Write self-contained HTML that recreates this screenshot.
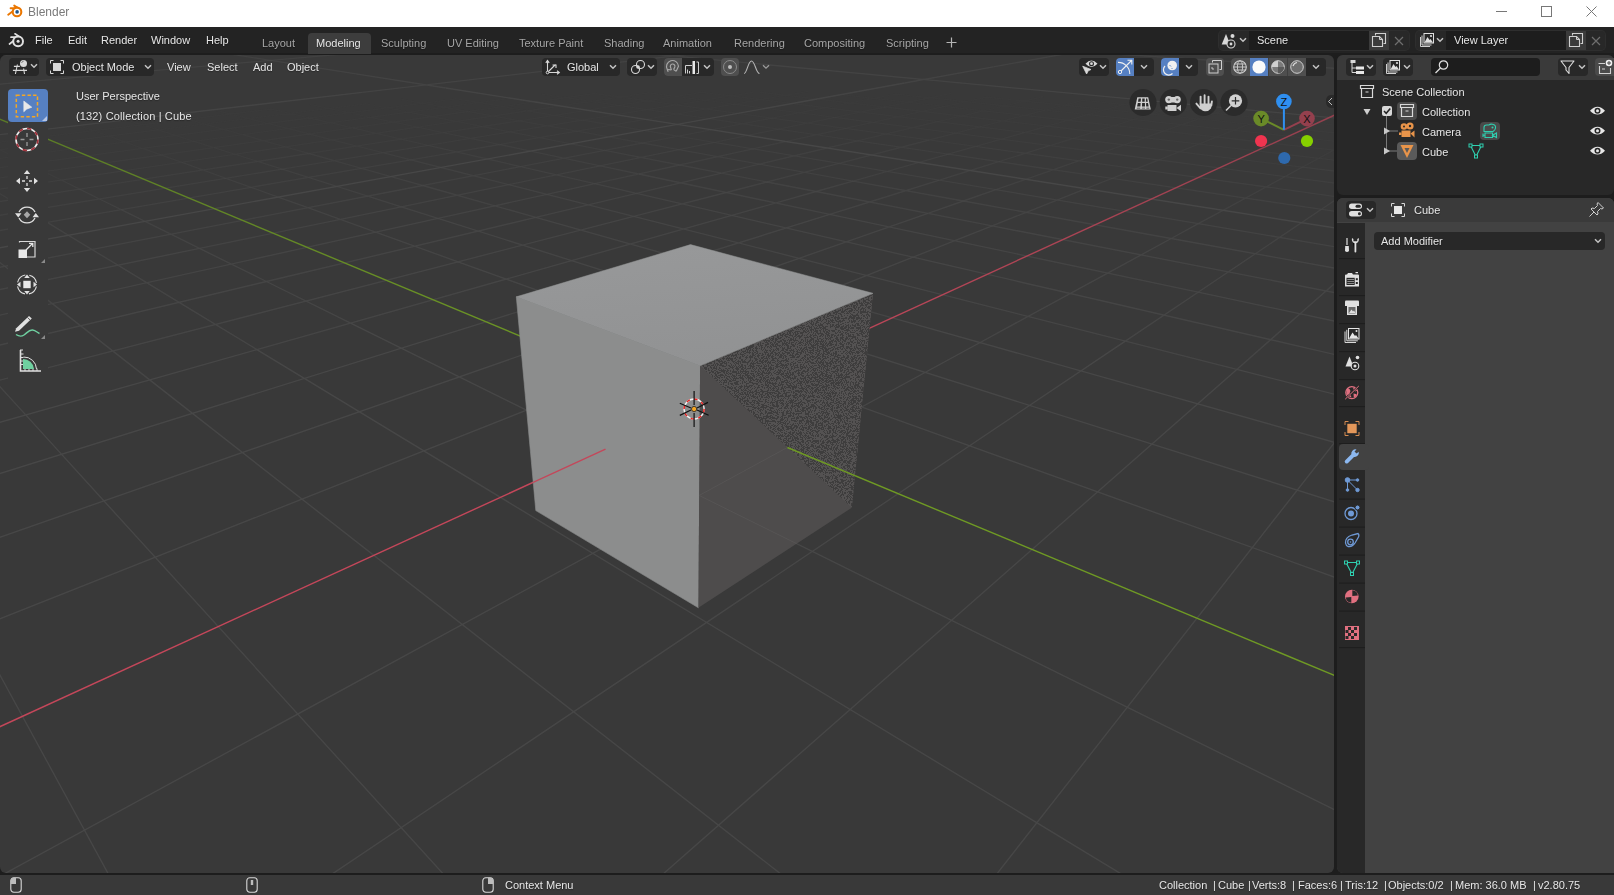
<!DOCTYPE html>
<html><head><meta charset="utf-8">
<style>
*{margin:0;padding:0;box-sizing:border-box}
html,body{width:1614px;height:895px;overflow:hidden;background:#1d1d1d;font-family:"Liberation Sans",sans-serif;font-size:11px;color:#e6e6e6}
.a{position:absolute}
.t{position:absolute;white-space:pre;line-height:1;text-shadow:0 1px 1px rgba(0,0,0,.35);will-change:transform}
svg{position:absolute;overflow:visible}
</style></head><body>

<div class="a" style="left:0;top:0;width:1614px;height:27px;background:#fff"></div>
<svg style="left:7px;top:4px" width="17" height="14" viewBox="0 0 17 14">
  <path d="M1.2 10.8L6.5 6.8M3.6 4.2H8.8M7.2 1.6L11.5 4.3" stroke="#ea7600" stroke-width="1.9" stroke-linecap="round" fill="none"/>
  <circle cx="10" cy="7.9" r="4.3" fill="#fff" stroke="#ea7600" stroke-width="2.1"/>
  <circle cx="10.1" cy="7.9" r="1.8" fill="#265787"/>
</svg>
<div class="t" style="left:28px;top:6px;font-size:12px;color:#7a7a7a;text-shadow:none">Blender</div>
<div class="a" style="left:1496px;top:11px;width:11px;height:1px;background:#777"></div>
<div class="a" style="left:1541px;top:6px;width:11px;height:11px;border:1px solid #777"></div>
<svg style="left:1586px;top:6px" width="11" height="11" viewBox="0 0 11 11"><path d="M0.5 0.5L10.5 10.5M10.5 0.5L0.5 10.5" stroke="#777" stroke-width="1"/></svg>

<div class="a" style="left:0;top:27px;width:1614px;height:26px;background:#232323"></div>
<svg style="left:8px;top:32px" width="17" height="16" viewBox="0 0 17 16">
  <path d="M1.5 12 L8 6.8 M3 5.2 L9.5 5.2 M7 1.8 L12.5 5.5" fill="none" stroke="#e0e0e0" stroke-width="1.7" stroke-linecap="round"/>
  <circle cx="10.1" cy="9.3" r="4.9" fill="#232323" stroke="#e0e0e0" stroke-width="2"/>
  <circle cx="10.1" cy="9.3" r="1.5" fill="#e0e0e0"/>
</svg>
<div class="t" style="left:34.5px;top:35px">File</div>
<div class="t" style="left:67.5px;top:35px">Edit</div>
<div class="t" style="left:101px;top:35px">Render</div>
<div class="t" style="left:151px;top:35px">Window</div>
<div class="t" style="left:206px;top:35px">Help</div>
<div class="a" style="left:308px;top:33px;width:63px;height:21px;background:#3d3d3d;border-radius:4px 4px 0 0"></div>
<div class="t" style="left:262px;top:38px;color:#a5a5a5">Layout</div>
<div class="t" style="left:316px;top:38px;color:#e6e6e6">Modeling</div>
<div class="t" style="left:381px;top:38px;color:#a5a5a5">Sculpting</div>
<div class="t" style="left:447px;top:38px;color:#a5a5a5">UV Editing</div>
<div class="t" style="left:519px;top:38px;color:#a5a5a5">Texture Paint</div>
<div class="t" style="left:604px;top:38px;color:#a5a5a5">Shading</div>
<div class="t" style="left:663px;top:38px;color:#a5a5a5">Animation</div>
<div class="t" style="left:734px;top:38px;color:#a5a5a5">Rendering</div>
<div class="t" style="left:804px;top:38px;color:#a5a5a5">Compositing</div>
<div class="t" style="left:886px;top:38px;color:#a5a5a5">Scripting</div>
<svg style="left:946px;top:37px" width="11" height="11" viewBox="0 0 11 11"><path d="M5.5 0.5V10.5M0.5 5.5H10.5" stroke="#b5b5b5" stroke-width="1.2"/></svg>
<!-- scene selector -->
<div class="a" style="left:1218px;top:30px;width:192px;height:21px;background:#2e2e2e;border-radius:5px"></div>
<div class="a" style="left:1415px;top:30px;width:191px;height:21px;background:#2e2e2e;border-radius:5px"></div>
<div class="a" style="left:1219px;top:31px;width:30px;height:19px;background:#282828;border-radius:4px 0 0 4px"></div>
<div class="a" style="left:1249px;top:31px;width:120px;height:19px;background:#1d1d1d"></div>
<div class="a" style="left:1369px;top:31px;width:20px;height:19px;background:#3b3b3b"></div>
<div class="a" style="left:1389px;top:31px;width:20px;height:19px;background:#282828;border-radius:0 4px 4px 0"></div>
<div class="t" style="left:1257px;top:35px">Scene</div>
<div class="a" style="left:1416px;top:31px;width:30px;height:19px;background:#282828;border-radius:4px 0 0 4px"></div>
<div class="a" style="left:1446px;top:31px;width:120px;height:19px;background:#1d1d1d"></div>
<div class="a" style="left:1566px;top:31px;width:20px;height:19px;background:#3b3b3b"></div>
<div class="a" style="left:1586px;top:31px;width:19px;height:19px;background:#282828;border-radius:0 4px 4px 0"></div>
<div class="t" style="left:1454px;top:35px">View Layer</div>
<svg style="left:1221px;top:32px" width="18" height="17" viewBox="0 0 18 17">
  <path d="M5 2L9.3 12.5H0.7Z" fill="#d8d8d8"/>
  <circle cx="11.5" cy="4" r="2" fill="#d8d8d8"/>
  <circle cx="10" cy="12" r="4" fill="#282828" stroke="#d8d8d8" stroke-width="1.1"/>
  <circle cx="10" cy="12" r="1.4" fill="#d8d8d8"/>
</svg>
<svg style="left:1239px;top:37px" width="8" height="6" viewBox="0 0 8 6"><path d="M1 1.2L4 4.2L7 1.2" stroke="#c4c4c4" stroke-width="1.5" fill="none"/></svg>
<svg style="left:1371px;top:32px" width="16" height="16" viewBox="0 0 16 16">
  <path d="M4.5 3.5V1.5H14.5V11.5H12.5" stroke="#d0d0d0" stroke-width="1.1" fill="none"/>
  <path d="M1.5 4.5H8.5L11.5 7.5V14.5H1.5Z" stroke="#d0d0d0" stroke-width="1.1" fill="none"/>
  <path d="M8.5 4.5V7.5H11.5" stroke="#d0d0d0" stroke-width="1" fill="none"/>
</svg>
<svg style="left:1394px;top:36px" width="10" height="10" viewBox="0 0 10 10"><path d="M1 1L9 9M9 1L1 9" stroke="#6e6e6e" stroke-width="1.2"/></svg>
<svg style="left:1419px;top:32px" width="18" height="16" viewBox="0 0 18 16">
  <path d="M1.5 5V14.5H11M3 3.5V13H12.5" stroke="#d0d0d0" stroke-width="1" fill="none"/>
  <rect x="5" y="1.5" width="9.5" height="9.5" stroke="#e0e0e0" stroke-width="1" fill="none"/>
  <path d="M5.5 10.5L8.5 5L10.5 8L11.5 7L14 10.5Z" fill="#e0e0e0"/><circle cx="12" cy="4" r="1.1" fill="#e0e0e0"/>
</svg>
<svg style="left:1436px;top:37px" width="8" height="6" viewBox="0 0 8 6"><path d="M1 1.2L4 4.2L7 1.2" stroke="#c4c4c4" stroke-width="1.5" fill="none"/></svg>
<svg style="left:1568px;top:32px" width="16" height="16" viewBox="0 0 16 16">
  <path d="M4.5 3.5V1.5H14.5V11.5H12.5" stroke="#d0d0d0" stroke-width="1.1" fill="none"/>
  <path d="M1.5 4.5H8.5L11.5 7.5V14.5H1.5Z" stroke="#d0d0d0" stroke-width="1.1" fill="none"/>
  <path d="M8.5 4.5V7.5H11.5" stroke="#d0d0d0" stroke-width="1" fill="none"/>
</svg>
<svg style="left:1591px;top:36px" width="10" height="10" viewBox="0 0 10 10"><path d="M1 1L9 9M9 1L1 9" stroke="#6e6e6e" stroke-width="1.2"/></svg>

<div class="a" style="left:0;top:55px;width:1334px;height:818px;background:#393939;border-radius:6px;overflow:hidden">
<svg style="left:0;top:-55px" width="1334" height="872" viewBox="0 0 1334 872">
<g stroke="#474747" stroke-width="1.35" fill="none">
<path d="M-12.7 143.5L-35.9 132.0M1372.7 128.8L1394.8 116.8M108.8 136.2L79.1 125.4M1249.2 124.1L1277.9 112.7M158.2 129.9L126.5 119.9M1198.7 118.9L1229.5 108.1M204.7 124.1L171.2 114.7M1133.4 119.6L1183.8 103.9M267.6 123.4L213.6 109.7M1087.9 114.7L1124.0 104.5M309.6 118.0L271.3 109.1M1045.0 110.1L1082.4 100.4M370.7 117.3L309.9 104.4M983.5 110.8L1043.1 96.6M408.7 112.1L366.1 103.8M944.8 106.4L986.6 97.2M468.2 111.5L401.3 99.4M885.1 107.0L950.7 93.5M527.7 110.9L456.1 98.8M825.5 107.7L895.7 94.1M618.3 105.4L541.7 94.1M734.2 104.2L809.5 91.2M676.2 104.8L595.2 93.5M676.2 104.8L755.9 91.8M734.2 104.2L648.7 92.9M618.3 105.4L702.3 92.3M792.1 103.5L702.3 92.3M560.4 106.0L648.7 92.9M885.1 107.0L755.9 91.8M468.2 111.5L595.2 93.5M983.5 110.8L840.7 94.7M408.7 112.1L511.0 98.2M1087.9 114.7L895.7 94.1M309.6 118.0L456.1 98.8M1249.2 124.1L986.6 97.2M158.2 129.9L366.1 103.8M1432.5 134.7L1082.4 100.4M-71.1 150.6L271.3 109.1" stroke-opacity="0.08"/>
<path d="M-47.9 164.6L-59.9 157.3M13.8 156.6L-12.7 143.5M1333.6 150.1L1372.7 128.8M142.6 148.3L108.8 136.2M1216.6 137.0L1249.2 124.1M194.1 141.3L158.2 129.9M1163.9 131.0L1198.7 118.9M242.4 134.7L204.7 124.1M1094.4 131.8L1133.4 119.6M309.3 134.0L267.6 123.4M1047.2 126.2L1087.9 114.7M352.6 127.9L309.6 118.0M979.9 126.9L1045.0 110.1M417.5 127.2L370.7 117.3M937.7 121.7L983.5 110.8M482.4 126.5L408.7 112.1M872.6 122.4L944.8 106.4M519.4 120.8L468.2 111.5M834.9 117.4L885.1 107.0M582.4 120.1L527.7 110.9M771.7 118.1L825.5 107.7M-27.4 13.5L-52.2 9.6M708.6 118.7L618.3 105.4M645.5 119.4L734.2 104.2M771.7 118.1L676.2 104.8M582.4 120.1L676.2 104.8M834.9 117.4L734.2 104.2M519.4 120.8L618.3 105.4M937.7 121.7L792.1 103.5M417.5 127.2L560.4 106.0M1047.2 126.2L885.1 107.0M309.3 134.0L468.2 111.5M1216.6 137.0L983.5 110.8M194.1 141.3L408.7 112.1M1410.8 149.3L1087.9 114.7M-114.2 173.3L309.6 118.0M1422.0 141.7L1249.2 124.1M-59.9 157.3L158.2 129.9M153.7 7.3L105.2 2.7M318.4 2.3L281.2 -0.1M153.7 7.3L318.1 -0.5M-52.2 9.6L174.0 -0.2" stroke-opacity="0.17"/>
<path d="M-35.0 172.4L-47.9 164.6M1385.6 166.2L1410.8 149.3M44.2 171.6L13.8 156.6M1318.6 158.3L1333.6 150.1M161.3 155.0L142.6 148.3M1198.6 144.1L1216.6 137.0M213.9 147.6L194.1 141.3M1124.2 144.9L1163.9 131.0M285.3 146.8L242.4 134.7M1072.9 138.5L1094.4 131.8M332.2 139.8L309.3 134.0M1024.9 132.5L1047.2 126.2M401.3 139.1L352.6 127.9M955.4 133.2L979.9 126.9M443.1 132.6L417.5 127.2M886.0 134.0L937.7 121.7M510.1 131.9L482.4 126.5M845.5 128.3L872.6 122.4M577.1 131.2L519.4 120.8M778.4 129.1L834.9 117.4M644.2 130.5L582.4 120.1M711.2 129.8L771.7 118.1M20.0 20.9L-27.4 13.5M1325.2 6.5L1364.4 -0.7M778.4 129.1L708.6 118.7M577.1 131.2L645.5 119.4M845.5 128.3L771.7 118.1M510.1 131.9L582.4 120.1M955.4 133.2L834.9 117.4M401.3 139.1L519.4 120.8M1072.9 138.5L937.7 121.7M285.3 146.8L417.5 127.2M1256.4 150.9L1047.2 126.2M161.3 155.0L309.3 134.0M1468.9 165.3L1216.6 137.0M-103.4 181.7L194.1 141.3M219.3 13.4L153.7 7.3M1123.4 3.4L1154.9 -0.3M406.8 8.0L318.4 2.3M934.4 2.2L966.1 -0.6M595.6 4.1L505.3 -0.3M744.9 2.4L782.9 -0.3M821.1 2.2L762.4 -0.0M519.6 5.5L620.6 -0.6M1163.8 3.7L1037.0 -0.2M179.3 14.6L458.8 -0.3M1419.4 1.5L1341.6 -0.4M-53.9 17.2L153.7 7.3" stroke-opacity="0.25"/>
<path d="M-6.1 190.0L-35.0 172.4M1371.5 175.7L1385.6 166.2M61.2 180.0L44.2 171.6M1302.4 167.1L1318.6 158.3M181.3 162.2L161.3 155.0M1158.6 160.0L1198.6 144.1M257.7 161.4L213.9 147.6M1102.2 152.5L1124.2 144.9M308.9 153.5L285.3 146.8M1049.9 145.7L1072.9 138.5M382.8 152.7L332.2 139.8M975.6 146.4L1024.9 132.5M428.1 145.3L401.3 139.1M929.3 140.0L955.4 133.2M499.6 144.5L443.1 132.6M857.6 140.8L886.0 134.0M571.1 143.8L510.1 131.9M785.9 141.5L845.5 128.3M642.6 143.0L577.1 131.2M714.2 142.3L778.4 129.1M714.2 142.3L644.2 130.5M642.6 143.0L711.2 129.8M75.2 29.6L20.0 20.9M1270.5 16.4L1325.2 6.5M857.6 140.8L778.4 129.1M499.6 144.5L577.1 131.2M975.6 146.4L845.5 128.3M428.1 145.3L510.1 131.9M1102.2 152.5L955.4 133.2M308.9 153.5L401.3 139.1M1302.4 167.1L1072.9 138.5M123.5 170.8L285.3 146.8M1458.2 174.8L1256.4 150.9M-91.7 190.9L161.3 155.0M302.8 21.3L219.3 13.4M1040.4 13.1L1123.4 3.4M520.3 15.4L406.8 8.0M821.5 12.1L934.4 2.2M757.7 12.0L595.6 4.1M584.0 13.9L744.9 2.4M1131.2 14.0L821.1 2.2M212.8 24.1L519.6 5.5M1402.7 11.0L1163.8 3.7M-56.1 27.1L179.3 14.6" stroke-opacity="0.33"/>
<path d="M10.2 199.9L-6.1 190.0M1356.3 185.9L1371.5 175.7M79.6 189.1L61.2 180.0M1285.0 176.6L1302.4 167.1M226.0 178.3L181.3 162.2M1136.2 168.8L1158.6 160.0M282.1 169.1L257.7 161.4M1078.6 160.8L1102.2 152.5M361.6 168.3L308.9 153.5M998.8 161.6L1049.9 145.7M410.9 159.8L382.8 152.7M948.3 154.2L975.6 146.4M487.5 159.0L428.1 145.3M871.4 155.0L929.3 140.0M530.7 151.1L499.6 144.5M827.1 148.0L857.6 140.8M604.8 150.3L571.1 143.8M753.0 148.8L785.9 141.5M678.8 149.6L642.6 143.0M678.8 149.6L714.2 142.3M753.0 148.8L714.2 142.3M604.8 150.3L642.6 143.0M147.5 41.0L75.2 29.6M1199.0 29.5L1270.5 16.4M948.3 154.2L857.6 140.8M410.9 159.8L499.6 144.5M1136.2 168.8L975.6 146.4M282.1 169.1L428.1 145.3M1433.9 196.1L1102.2 152.5M79.6 189.1L308.9 153.5M1446.5 185.0L1302.4 167.1M-79.0 200.8L123.5 170.8M401.3 30.5L302.8 21.3M931.3 25.9L1040.4 13.1M671.5 25.2L520.3 15.4M671.5 25.2L821.5 12.1M1065.0 26.9L757.7 12.0M280.0 35.5L584.0 13.9M1407.2 24.4L1131.2 14.0M-59.0 40.6L212.8 24.1" stroke-opacity="0.42"/>
<path d="M27.9 210.6L10.2 199.9M1339.6 197.1L1356.3 185.9M99.5 199.0L79.6 189.1M1245.5 198.1L1285.0 176.6M251.0 187.3L226.0 178.3M1112.1 178.4L1136.2 168.8M308.4 177.4L282.1 169.1M1025.7 179.3L1078.6 160.8M391.0 176.6L361.6 168.3M970.2 170.5L998.8 161.6M441.0 167.5L410.9 159.8M887.3 171.4L948.3 154.2M520.5 166.6L487.5 159.0M839.1 163.3L871.4 155.0M600.1 165.8L530.7 151.1M759.4 164.1L827.1 148.0M679.7 165.0L604.8 150.3M679.7 165.0L753.0 148.8M759.4 164.1L678.8 149.6M600.1 165.8L678.8 149.6M839.1 163.3L753.0 148.8M520.5 166.6L604.8 150.3M202.7 49.7L147.5 41.0M1144.4 39.4L1199.0 29.5M1112.1 178.4L948.3 154.2M251.0 187.3L410.9 159.8M1420.0 208.3L1136.2 168.8M-50.2 223.4L282.1 169.1M-65.2 211.6L79.6 189.1M488.8 38.7L401.3 30.5M855.9 34.7L931.3 25.9M822.5 35.0L671.5 25.2M522.1 38.3L671.5 25.2M1413.8 43.8L1065.0 26.9M-63.2 60.0L280.0 35.5" stroke-opacity="0.50"/>
<path d="M-33.7 236.3L-50.2 223.4M47.3 222.4L27.9 210.6M1321.5 209.3L1339.6 197.1M121.2 209.7L99.5 199.0M1223.0 210.3L1245.5 198.1M278.2 197.1L251.0 187.3M1085.9 188.7L1112.1 178.4M367.7 196.2L308.4 177.4M995.9 189.7L1025.7 179.3M422.8 185.5L391.0 176.6M939.4 180.2L970.2 170.5M508.7 184.6L441.0 167.5M853.1 181.1L887.3 171.4M594.7 183.7L520.5 166.6M766.9 182.0L839.1 163.3M638.9 174.0L600.1 165.8M721.6 173.1L759.4 164.1M766.9 182.0L679.7 165.0M594.7 183.7L679.7 165.0M853.1 181.1L759.4 164.1M508.7 184.6L600.1 165.8M995.9 189.7L839.1 163.3M422.8 185.5L520.5 166.6M270.6 60.4L202.7 49.7M1077.4 51.6L1144.4 39.4M1404.9 221.6L1112.1 178.4M-122.8 251.7L251.0 187.3M597.9 48.9L488.8 38.7M747.9 47.3L855.9 34.7M1077.4 51.6L822.5 35.0M270.6 60.4L522.1 38.3" stroke-opacity="0.58"/>
<path d="M-15.4 250.6L-33.7 236.3M1388.2 236.3L1404.9 221.6M68.5 235.3L47.3 222.4M1279.6 237.4L1321.5 209.3M170.8 234.2L121.2 209.7M1198.3 223.7L1223.0 210.3M307.8 207.7L278.2 197.1M1026.3 212.3L1085.9 188.7M401.3 206.8L367.7 196.2M963.4 201.0L995.9 189.7M494.8 205.8L422.8 185.5M869.6 202.0L939.4 180.2M546.9 194.3L508.7 184.6M816.1 191.5L853.1 181.1M636.5 193.4L594.7 183.7M726.3 192.5L766.9 182.0M726.3 192.5L638.9 174.0M636.5 193.4L721.6 173.1M816.1 191.5L766.9 182.0M546.9 194.3L594.7 183.7M963.4 201.0L853.1 181.1M401.3 206.8L508.7 184.6M1198.3 223.7L995.9 189.7M242.5 220.4L422.8 185.5M355.9 73.8L270.6 60.4M993.3 66.9L1077.4 51.6M761.2 64.2L597.9 48.9M586.6 66.1L747.9 47.3M1424.1 74.1L1077.4 51.6M-69.8 90.2L270.6 60.4" stroke-opacity="0.67"/>
<path d="M4.7 266.3L-15.4 250.6M1349.1 270.7L1388.2 236.3M117.9 265.2L68.5 235.3M1255.4 253.7L1279.6 237.4M199.5 248.4L170.8 234.2M1171.2 238.5L1198.3 223.7M375.6 232.1L307.8 207.7M992.1 225.9L1026.3 212.3M438.0 218.4L401.3 206.8M928.0 213.4L963.4 201.0M535.8 217.4L494.8 205.8M829.8 214.4L869.6 202.0M633.7 216.4L546.9 194.3M731.8 215.4L816.1 191.5M731.8 215.4L636.5 193.4M633.7 216.4L726.3 192.5M829.8 214.4L726.3 192.5M535.8 217.4L636.5 193.4M992.1 225.9L816.1 191.5M438.0 218.4L546.9 194.3M1171.2 238.5L963.4 201.0M199.5 248.4L401.3 206.8M1470.0 269.5L1198.3 223.7M-92.3 285.1L242.5 220.4M445.8 88.0L355.9 73.8M904.7 83.0L993.3 66.9M989.1 85.6L761.2 64.2M362.2 92.4L586.6 66.1" stroke-opacity="0.75"/>
<path d="M52.3 303.6L4.7 266.3M1300.1 313.8L1349.1 270.7M179.1 302.3L117.9 265.2M1198.1 292.2L1255.4 253.7M266.4 281.5L199.5 248.4M1107.7 273.1L1171.2 238.5M458.0 261.8L375.6 232.1M913.0 257.2L992.1 225.9M571.6 260.6L438.0 218.4M799.1 258.3L928.0 213.4M685.3 259.5L535.8 217.4M685.3 259.5L829.8 214.4M799.1 258.3L633.7 216.4M571.6 260.6L731.8 215.4M913.0 257.2L731.8 215.4M458.0 261.8L633.7 216.4M1198.1 292.2L829.8 214.4M266.4 281.5L535.8 217.4M1436.4 312.4L992.1 225.9M-54.2 327.1L438.0 218.4M1454.2 289.7L1171.2 238.5M-74.4 304.8L199.5 248.4M535.0 102.0L445.8 88.0M817.0 99.0L904.7 83.0M1442.3 128.1L989.1 85.6M-81.5 144.2L362.2 92.4" stroke-opacity="0.83"/>
<path d="M25.7 414.9L-54.2 327.1M1366.1 402.2L1416.1 338.3M149.7 379.9L52.3 303.6M1236.8 369.4L1300.1 313.8M256.9 349.6L179.1 302.3M1125.3 341.1L1198.1 292.2M350.6 323.1L266.4 281.5M980.1 342.5L1107.7 273.1M621.1 320.4L458.0 261.8M756.6 319.1L913.0 257.2M756.6 319.1L571.6 260.6M621.1 320.4L799.1 258.3M892.3 317.8L685.3 259.5M485.8 321.8L685.3 259.5M1236.8 369.4L799.1 258.3M256.9 349.6L571.6 260.6M1534.6 400.6L913.0 257.2M-140.8 416.5L458.0 261.8M1416.1 338.3L1198.1 292.2M-159.1 382.9L266.4 281.5M677.4 124.4L535.0 102.0M677.4 124.4L817.0 99.0" stroke-opacity="0.92"/>
<path d="M168.3 984.1L-63.1 559.2M1289.6 976.1L1405.1 704.9M541.0 981.4L25.7 414.9M914.7 978.8L1366.1 402.2M914.7 978.8L149.7 379.9M541.0 981.4L1236.8 369.4M1289.6 976.1L256.9 349.6M168.3 984.1L1125.3 341.1M1665.6 973.4L350.6 323.1M-203.2 986.8L980.1 342.5M1442.9 616.1L621.1 320.4M-252.2 718.6L756.6 319.1M1472.9 545.6L756.6 319.1M-63.1 559.2L621.1 320.4M1497.3 488.2L892.3 317.8M-93.8 502.7L485.8 321.8M1517.6 440.7L1236.8 369.4M-119.3 455.9L256.9 349.6M1484.1 251.4L677.4 124.4M-108.4 267.5L677.4 124.4" stroke-opacity="1.00"/>
</g>
<defs>
<linearGradient id="gx" gradientUnits="userSpaceOnUse" x1="770" y1="374" x2="1334" y2="117"><stop offset="0" stop-color="#c4475a"/><stop offset="1" stop-color="#94404e"/></linearGradient>
<linearGradient id="gy" gradientUnits="userSpaceOnUse" x1="615" y1="375" x2="0" y2="118"><stop offset="0" stop-color="#6f9a24"/><stop offset="1" stop-color="#5a7a26"/></linearGradient>
</defs>
<path d="M-19067.6 9463.5L605.5 449.2" stroke="#c4475a" stroke-width="1.4" fill="none"/>
<path d="M769.8 373.9L1591.2 -2.5" stroke="url(#gx)" stroke-width="1.4" fill="none"/>
<path d="M21320.0 9004.7L787.4 447.5" stroke="#6f9a24" stroke-width="1.4" fill="none"/>
<path d="M614.5 375.4L-243.4 17.9" stroke="url(#gy)" stroke-width="1.4" fill="none"/>

<clipPath id="leftclip"><polygon points="700.1,365.8 516.3,296.8 535.8,510.6 698.4,607.8"/></clipPath>
<clipPath id="rightclip"><polygon points="700.1,365.8 873.0,293.3 851.8,507.7 698.4,607.8"/></clipPath>
<polygon points="700.1,365.8 516.3,296.8 535.8,510.6 698.4,607.8" fill="#8c8d8d" stroke="#8c8d8d" stroke-width="0.6"/>
<polygon points="700.1,365.8 873.0,293.3 851.8,507.7 698.4,607.8" fill="#4e4c4c"/>
<g clip-path="url(#rightclip)" stroke="#5c5a5a" stroke-width="1" fill="none" opacity="0.6"><path d="M-12.7 143.5L-35.9 132.0M1372.7 128.8L1394.8 116.8M108.8 136.2L79.1 125.4M1249.2 124.1L1277.9 112.7M158.2 129.9L126.5 119.9M1198.7 118.9L1229.5 108.1M204.7 124.1L171.2 114.7M1133.4 119.6L1183.8 103.9M267.6 123.4L213.6 109.7M1087.9 114.7L1124.0 104.5M309.6 118.0L271.3 109.1M1045.0 110.1L1082.4 100.4M370.7 117.3L309.9 104.4M983.5 110.8L1043.1 96.6M408.7 112.1L366.1 103.8M944.8 106.4L986.6 97.2M468.2 111.5L401.3 99.4M885.1 107.0L950.7 93.5M527.7 110.9L456.1 98.8M825.5 107.7L895.7 94.1M618.3 105.4L541.7 94.1M734.2 104.2L809.5 91.2M676.2 104.8L595.2 93.5M676.2 104.8L755.9 91.8M734.2 104.2L648.7 92.9M618.3 105.4L702.3 92.3M792.1 103.5L702.3 92.3M560.4 106.0L648.7 92.9M885.1 107.0L755.9 91.8M468.2 111.5L595.2 93.5M983.5 110.8L840.7 94.7M408.7 112.1L511.0 98.2M1087.9 114.7L895.7 94.1M309.6 118.0L456.1 98.8M1249.2 124.1L986.6 97.2M158.2 129.9L366.1 103.8M1432.5 134.7L1082.4 100.4M-71.1 150.6L271.3 109.1" stroke-opacity="0.08"/>
<path d="M-47.9 164.6L-59.9 157.3M13.8 156.6L-12.7 143.5M1333.6 150.1L1372.7 128.8M142.6 148.3L108.8 136.2M1216.6 137.0L1249.2 124.1M194.1 141.3L158.2 129.9M1163.9 131.0L1198.7 118.9M242.4 134.7L204.7 124.1M1094.4 131.8L1133.4 119.6M309.3 134.0L267.6 123.4M1047.2 126.2L1087.9 114.7M352.6 127.9L309.6 118.0M979.9 126.9L1045.0 110.1M417.5 127.2L370.7 117.3M937.7 121.7L983.5 110.8M482.4 126.5L408.7 112.1M872.6 122.4L944.8 106.4M519.4 120.8L468.2 111.5M834.9 117.4L885.1 107.0M582.4 120.1L527.7 110.9M771.7 118.1L825.5 107.7M-27.4 13.5L-52.2 9.6M708.6 118.7L618.3 105.4M645.5 119.4L734.2 104.2M771.7 118.1L676.2 104.8M582.4 120.1L676.2 104.8M834.9 117.4L734.2 104.2M519.4 120.8L618.3 105.4M937.7 121.7L792.1 103.5M417.5 127.2L560.4 106.0M1047.2 126.2L885.1 107.0M309.3 134.0L468.2 111.5M1216.6 137.0L983.5 110.8M194.1 141.3L408.7 112.1M1410.8 149.3L1087.9 114.7M-114.2 173.3L309.6 118.0M1422.0 141.7L1249.2 124.1M-59.9 157.3L158.2 129.9M153.7 7.3L105.2 2.7M318.4 2.3L281.2 -0.1M153.7 7.3L318.1 -0.5M-52.2 9.6L174.0 -0.2" stroke-opacity="0.17"/>
<path d="M-35.0 172.4L-47.9 164.6M1385.6 166.2L1410.8 149.3M44.2 171.6L13.8 156.6M1318.6 158.3L1333.6 150.1M161.3 155.0L142.6 148.3M1198.6 144.1L1216.6 137.0M213.9 147.6L194.1 141.3M1124.2 144.9L1163.9 131.0M285.3 146.8L242.4 134.7M1072.9 138.5L1094.4 131.8M332.2 139.8L309.3 134.0M1024.9 132.5L1047.2 126.2M401.3 139.1L352.6 127.9M955.4 133.2L979.9 126.9M443.1 132.6L417.5 127.2M886.0 134.0L937.7 121.7M510.1 131.9L482.4 126.5M845.5 128.3L872.6 122.4M577.1 131.2L519.4 120.8M778.4 129.1L834.9 117.4M644.2 130.5L582.4 120.1M711.2 129.8L771.7 118.1M20.0 20.9L-27.4 13.5M1325.2 6.5L1364.4 -0.7M778.4 129.1L708.6 118.7M577.1 131.2L645.5 119.4M845.5 128.3L771.7 118.1M510.1 131.9L582.4 120.1M955.4 133.2L834.9 117.4M401.3 139.1L519.4 120.8M1072.9 138.5L937.7 121.7M285.3 146.8L417.5 127.2M1256.4 150.9L1047.2 126.2M161.3 155.0L309.3 134.0M1468.9 165.3L1216.6 137.0M-103.4 181.7L194.1 141.3M219.3 13.4L153.7 7.3M1123.4 3.4L1154.9 -0.3M406.8 8.0L318.4 2.3M934.4 2.2L966.1 -0.6M595.6 4.1L505.3 -0.3M744.9 2.4L782.9 -0.3M821.1 2.2L762.4 -0.0M519.6 5.5L620.6 -0.6M1163.8 3.7L1037.0 -0.2M179.3 14.6L458.8 -0.3M1419.4 1.5L1341.6 -0.4M-53.9 17.2L153.7 7.3" stroke-opacity="0.25"/>
<path d="M-6.1 190.0L-35.0 172.4M1371.5 175.7L1385.6 166.2M61.2 180.0L44.2 171.6M1302.4 167.1L1318.6 158.3M181.3 162.2L161.3 155.0M1158.6 160.0L1198.6 144.1M257.7 161.4L213.9 147.6M1102.2 152.5L1124.2 144.9M308.9 153.5L285.3 146.8M1049.9 145.7L1072.9 138.5M382.8 152.7L332.2 139.8M975.6 146.4L1024.9 132.5M428.1 145.3L401.3 139.1M929.3 140.0L955.4 133.2M499.6 144.5L443.1 132.6M857.6 140.8L886.0 134.0M571.1 143.8L510.1 131.9M785.9 141.5L845.5 128.3M642.6 143.0L577.1 131.2M714.2 142.3L778.4 129.1M714.2 142.3L644.2 130.5M642.6 143.0L711.2 129.8M75.2 29.6L20.0 20.9M1270.5 16.4L1325.2 6.5M857.6 140.8L778.4 129.1M499.6 144.5L577.1 131.2M975.6 146.4L845.5 128.3M428.1 145.3L510.1 131.9M1102.2 152.5L955.4 133.2M308.9 153.5L401.3 139.1M1302.4 167.1L1072.9 138.5M123.5 170.8L285.3 146.8M1458.2 174.8L1256.4 150.9M-91.7 190.9L161.3 155.0M302.8 21.3L219.3 13.4M1040.4 13.1L1123.4 3.4M520.3 15.4L406.8 8.0M821.5 12.1L934.4 2.2M757.7 12.0L595.6 4.1M584.0 13.9L744.9 2.4M1131.2 14.0L821.1 2.2M212.8 24.1L519.6 5.5M1402.7 11.0L1163.8 3.7M-56.1 27.1L179.3 14.6" stroke-opacity="0.33"/>
<path d="M10.2 199.9L-6.1 190.0M1356.3 185.9L1371.5 175.7M79.6 189.1L61.2 180.0M1285.0 176.6L1302.4 167.1M226.0 178.3L181.3 162.2M1136.2 168.8L1158.6 160.0M282.1 169.1L257.7 161.4M1078.6 160.8L1102.2 152.5M361.6 168.3L308.9 153.5M998.8 161.6L1049.9 145.7M410.9 159.8L382.8 152.7M948.3 154.2L975.6 146.4M487.5 159.0L428.1 145.3M871.4 155.0L929.3 140.0M530.7 151.1L499.6 144.5M827.1 148.0L857.6 140.8M604.8 150.3L571.1 143.8M753.0 148.8L785.9 141.5M678.8 149.6L642.6 143.0M678.8 149.6L714.2 142.3M753.0 148.8L714.2 142.3M604.8 150.3L642.6 143.0M147.5 41.0L75.2 29.6M1199.0 29.5L1270.5 16.4M948.3 154.2L857.6 140.8M410.9 159.8L499.6 144.5M1136.2 168.8L975.6 146.4M282.1 169.1L428.1 145.3M1433.9 196.1L1102.2 152.5M79.6 189.1L308.9 153.5M1446.5 185.0L1302.4 167.1M-79.0 200.8L123.5 170.8M401.3 30.5L302.8 21.3M931.3 25.9L1040.4 13.1M671.5 25.2L520.3 15.4M671.5 25.2L821.5 12.1M1065.0 26.9L757.7 12.0M280.0 35.5L584.0 13.9M1407.2 24.4L1131.2 14.0M-59.0 40.6L212.8 24.1" stroke-opacity="0.42"/>
<path d="M27.9 210.6L10.2 199.9M1339.6 197.1L1356.3 185.9M99.5 199.0L79.6 189.1M1245.5 198.1L1285.0 176.6M251.0 187.3L226.0 178.3M1112.1 178.4L1136.2 168.8M308.4 177.4L282.1 169.1M1025.7 179.3L1078.6 160.8M391.0 176.6L361.6 168.3M970.2 170.5L998.8 161.6M441.0 167.5L410.9 159.8M887.3 171.4L948.3 154.2M520.5 166.6L487.5 159.0M839.1 163.3L871.4 155.0M600.1 165.8L530.7 151.1M759.4 164.1L827.1 148.0M679.7 165.0L604.8 150.3M679.7 165.0L753.0 148.8M759.4 164.1L678.8 149.6M600.1 165.8L678.8 149.6M839.1 163.3L753.0 148.8M520.5 166.6L604.8 150.3M202.7 49.7L147.5 41.0M1144.4 39.4L1199.0 29.5M1112.1 178.4L948.3 154.2M251.0 187.3L410.9 159.8M1420.0 208.3L1136.2 168.8M-50.2 223.4L282.1 169.1M-65.2 211.6L79.6 189.1M488.8 38.7L401.3 30.5M855.9 34.7L931.3 25.9M822.5 35.0L671.5 25.2M522.1 38.3L671.5 25.2M1413.8 43.8L1065.0 26.9M-63.2 60.0L280.0 35.5" stroke-opacity="0.50"/>
<path d="M-33.7 236.3L-50.2 223.4M47.3 222.4L27.9 210.6M1321.5 209.3L1339.6 197.1M121.2 209.7L99.5 199.0M1223.0 210.3L1245.5 198.1M278.2 197.1L251.0 187.3M1085.9 188.7L1112.1 178.4M367.7 196.2L308.4 177.4M995.9 189.7L1025.7 179.3M422.8 185.5L391.0 176.6M939.4 180.2L970.2 170.5M508.7 184.6L441.0 167.5M853.1 181.1L887.3 171.4M594.7 183.7L520.5 166.6M766.9 182.0L839.1 163.3M638.9 174.0L600.1 165.8M721.6 173.1L759.4 164.1M766.9 182.0L679.7 165.0M594.7 183.7L679.7 165.0M853.1 181.1L759.4 164.1M508.7 184.6L600.1 165.8M995.9 189.7L839.1 163.3M422.8 185.5L520.5 166.6M270.6 60.4L202.7 49.7M1077.4 51.6L1144.4 39.4M1404.9 221.6L1112.1 178.4M-122.8 251.7L251.0 187.3M597.9 48.9L488.8 38.7M747.9 47.3L855.9 34.7M1077.4 51.6L822.5 35.0M270.6 60.4L522.1 38.3" stroke-opacity="0.58"/>
<path d="M-15.4 250.6L-33.7 236.3M1388.2 236.3L1404.9 221.6M68.5 235.3L47.3 222.4M1279.6 237.4L1321.5 209.3M170.8 234.2L121.2 209.7M1198.3 223.7L1223.0 210.3M307.8 207.7L278.2 197.1M1026.3 212.3L1085.9 188.7M401.3 206.8L367.7 196.2M963.4 201.0L995.9 189.7M494.8 205.8L422.8 185.5M869.6 202.0L939.4 180.2M546.9 194.3L508.7 184.6M816.1 191.5L853.1 181.1M636.5 193.4L594.7 183.7M726.3 192.5L766.9 182.0M726.3 192.5L638.9 174.0M636.5 193.4L721.6 173.1M816.1 191.5L766.9 182.0M546.9 194.3L594.7 183.7M963.4 201.0L853.1 181.1M401.3 206.8L508.7 184.6M1198.3 223.7L995.9 189.7M242.5 220.4L422.8 185.5M355.9 73.8L270.6 60.4M993.3 66.9L1077.4 51.6M761.2 64.2L597.9 48.9M586.6 66.1L747.9 47.3M1424.1 74.1L1077.4 51.6M-69.8 90.2L270.6 60.4" stroke-opacity="0.67"/>
<path d="M4.7 266.3L-15.4 250.6M1349.1 270.7L1388.2 236.3M117.9 265.2L68.5 235.3M1255.4 253.7L1279.6 237.4M199.5 248.4L170.8 234.2M1171.2 238.5L1198.3 223.7M375.6 232.1L307.8 207.7M992.1 225.9L1026.3 212.3M438.0 218.4L401.3 206.8M928.0 213.4L963.4 201.0M535.8 217.4L494.8 205.8M829.8 214.4L869.6 202.0M633.7 216.4L546.9 194.3M731.8 215.4L816.1 191.5M731.8 215.4L636.5 193.4M633.7 216.4L726.3 192.5M829.8 214.4L726.3 192.5M535.8 217.4L636.5 193.4M992.1 225.9L816.1 191.5M438.0 218.4L546.9 194.3M1171.2 238.5L963.4 201.0M199.5 248.4L401.3 206.8M1470.0 269.5L1198.3 223.7M-92.3 285.1L242.5 220.4M445.8 88.0L355.9 73.8M904.7 83.0L993.3 66.9M989.1 85.6L761.2 64.2M362.2 92.4L586.6 66.1" stroke-opacity="0.75"/>
<path d="M52.3 303.6L4.7 266.3M1300.1 313.8L1349.1 270.7M179.1 302.3L117.9 265.2M1198.1 292.2L1255.4 253.7M266.4 281.5L199.5 248.4M1107.7 273.1L1171.2 238.5M458.0 261.8L375.6 232.1M913.0 257.2L992.1 225.9M571.6 260.6L438.0 218.4M799.1 258.3L928.0 213.4M685.3 259.5L535.8 217.4M685.3 259.5L829.8 214.4M799.1 258.3L633.7 216.4M571.6 260.6L731.8 215.4M913.0 257.2L731.8 215.4M458.0 261.8L633.7 216.4M1198.1 292.2L829.8 214.4M266.4 281.5L535.8 217.4M1436.4 312.4L992.1 225.9M-54.2 327.1L438.0 218.4M1454.2 289.7L1171.2 238.5M-74.4 304.8L199.5 248.4M535.0 102.0L445.8 88.0M817.0 99.0L904.7 83.0M1442.3 128.1L989.1 85.6M-81.5 144.2L362.2 92.4" stroke-opacity="0.83"/>
<path d="M25.7 414.9L-54.2 327.1M1366.1 402.2L1416.1 338.3M149.7 379.9L52.3 303.6M1236.8 369.4L1300.1 313.8M256.9 349.6L179.1 302.3M1125.3 341.1L1198.1 292.2M350.6 323.1L266.4 281.5M980.1 342.5L1107.7 273.1M621.1 320.4L458.0 261.8M756.6 319.1L913.0 257.2M756.6 319.1L571.6 260.6M621.1 320.4L799.1 258.3M892.3 317.8L685.3 259.5M485.8 321.8L685.3 259.5M1236.8 369.4L799.1 258.3M256.9 349.6L571.6 260.6M1534.6 400.6L913.0 257.2M-140.8 416.5L458.0 261.8M1416.1 338.3L1198.1 292.2M-159.1 382.9L266.4 281.5M677.4 124.4L535.0 102.0M677.4 124.4L817.0 99.0" stroke-opacity="0.92"/>
<path d="M168.3 984.1L-63.1 559.2M1289.6 976.1L1405.1 704.9M541.0 981.4L25.7 414.9M914.7 978.8L1366.1 402.2M914.7 978.8L149.7 379.9M541.0 981.4L1236.8 369.4M1289.6 976.1L256.9 349.6M168.3 984.1L1125.3 341.1M1665.6 973.4L350.6 323.1M-203.2 986.8L980.1 342.5M1442.9 616.1L621.1 320.4M-252.2 718.6L756.6 319.1M1472.9 545.6L756.6 319.1M-63.1 559.2L621.1 320.4M1497.3 488.2L892.3 317.8M-93.8 502.7L485.8 321.8M1517.6 440.7L1236.8 369.4M-119.3 455.9L256.9 349.6M1484.1 251.4L677.4 124.4M-108.4 267.5L677.4 124.4" stroke-opacity="1.00"/></g>
<filter id="nz" x="0" y="0" width="1334" height="872" filterUnits="userSpaceOnUse" color-interpolation-filters="sRGB">
<feTurbulence type="fractalNoise" baseFrequency="1.4" numOctaves="1" seed="3" result="t"/>
<feColorMatrix in="t" type="matrix" values="1 0 0 0 0  1 0 0 0 0  1 0 0 0 0  0 0 0 0 1" result="g"/>
<feComponentTransfer in="g"><feFuncR type="discrete" tableValues="0.247 0.333"/><feFuncG type="discrete" tableValues="0.243 0.322"/><feFuncB type="discrete" tableValues="0.243 0.322"/></feComponentTransfer><feComposite in2="SourceAlpha" operator="in"/>
</filter>
<polygon points="700.1,365.8 873.0,293.3 851.8,507.7" fill="#4a4848" filter="url(#nz)"/>
<defs><linearGradient id="gtop" gradientUnits="userSpaceOnUse" x1="690" y1="245" x2="700" y2="365"><stop offset="0" stop-color="#979899"/><stop offset="1" stop-color="#919293"/></linearGradient></defs>
<polygon points="700.1,365.8 873.0,293.3 690.5,244.6 516.3,296.8" fill="url(#gtop)" stroke="#939495" stroke-width="0.5"/>
<path d="M-19067.6 9463.5L605.5 449.2" stroke="#c4475a" stroke-width="1.4" fill="none" clip-path="url(#leftclip)"/>
<path d="M21320.0 9004.7L787.4 447.5" stroke="#6f9a24" stroke-width="1.4" fill="none" clip-path="url(#rightclip)"/>
</svg></div>

<!-- viewport header -->
<div class="a" style="left:9px;top:58px;width:30px;height:18px;background:#282828;border-radius:4px"></div>
<svg style="left:12px;top:59px" width="18" height="16" viewBox="0 0 18 16">
  <path d="M1.9 7.4H7.9M0.9 11.4H15M5.4 5.5L3.4 15M11.6 9.5L12.5 15" stroke="#d8d8d8" stroke-width="1.1" fill="none"/>
  <circle cx="11.5" cy="4.4" r="3.5" fill="#d8d8d8"/>
  <path d="M9.6 3.8Q10.2 2.4 11.6 2.2" stroke="#555" stroke-width="0.8" fill="none"/>
</svg>
<svg style="left:30px;top:63px" width="8" height="6" viewBox="0 0 8 6"><path d="M1 1.2L4 4.2L7 1.2" stroke="#c4c4c4" stroke-width="1.5" fill="none"/></svg>
<div class="a" style="left:46px;top:58px;width:108px;height:18px;background:#282828;border-radius:4px"></div>
<svg style="left:50px;top:60px" width="14" height="14" viewBox="0 0 14 14">
  <path d="M0.5 3.5V0.5H3.5M10.5 0.5H13.5V3.5M13.5 10.5V13.5H10.5M3.5 13.5H0.5V10.5" stroke="#d8d8d8" stroke-width="1" fill="none"/>
  <rect x="3" y="3" width="8" height="8" fill="#d8d8d8"/>
</svg>
<div class="t" style="left:71.5px;top:61.5px">Object Mode</div>
<svg style="left:144px;top:64px" width="8" height="6" viewBox="0 0 8 6"><path d="M1 1.2L4 4.2L7 1.2" stroke="#c4c4c4" stroke-width="1.5" fill="none"/></svg>
<div class="t" style="left:167px;top:61.5px">View</div>
<div class="t" style="left:207px;top:61.5px">Select</div>
<div class="t" style="left:253px;top:61.5px">Add</div>
<div class="t" style="left:287px;top:61.5px">Object</div>
<!-- global -->
<div class="a" style="left:542px;top:58px;width:78px;height:18px;background:#282828;border-radius:4px"></div>
<svg style="left:545px;top:59px" width="16" height="16" viewBox="0 0 16 16">
  <path d="M2.5 13.5V2M0.8 3.8L2.5 1.5L4.2 3.8M2.5 13.5H14M12 11.8L14.3 13.5L12 15.2M2.5 13.5L10.5 5.5M7.5 6H11V9" stroke="#d8d8d8" stroke-width="1.1" fill="none"/>
  <circle cx="2.5" cy="13.5" r="1.3" fill="#282828" stroke="#d8d8d8" stroke-width="1"/>
</svg>
<div class="t" style="left:567px;top:61.5px">Global</div>
<svg style="left:609px;top:64px" width="8" height="6" viewBox="0 0 8 6"><path d="M1 1.2L4 4.2L7 1.2" stroke="#c4c4c4" stroke-width="1.5" fill="none"/></svg>
<div class="a" style="left:627px;top:58px;width:30px;height:18px;background:#282828;border-radius:4px"></div>
<svg style="left:630px;top:59px" width="16" height="16" viewBox="0 0 16 16">
  <circle cx="10.5" cy="5.5" r="4" stroke="#d8d8d8" stroke-width="1.1" fill="none"/>
  <circle cx="5.5" cy="10.5" r="4" stroke="#d8d8d8" stroke-width="1.1" fill="none"/>
  <circle cx="8" cy="8" r="1.8" fill="#d8d8d8"/>
</svg>
<svg style="left:647px;top:64px" width="8" height="6" viewBox="0 0 8 6"><path d="M1 1.2L4 4.2L7 1.2" stroke="#c4c4c4" stroke-width="1.5" fill="none"/></svg>
<!-- snap -->
<div class="a" style="left:664px;top:58px;width:50px;height:18px;background:#282828;border-radius:4px"></div>
<div class="a" style="left:664px;top:58px;width:18px;height:18px;background:#4f4f4f;border-radius:4px 0 0 4px"></div>
<svg style="left:665px;top:59px" width="16" height="16" viewBox="0 0 16 16">
  <path d="M3.2 12.8L2.3 10.5A6 6 0 1 1 13.5 7.2L11.2 12.2M8.6 10.6L9.8 8A2.3 2.3 0 1 0 5.6 8.4L6.4 10.9" stroke="#a8a8a8" stroke-width="1.2" fill="none"/>
  <path d="M2.3 10.5L6.4 10.9M11.2 12.2L8.6 10.6" stroke="#a8a8a8" stroke-width="1.1"/>
</svg>
<svg style="left:684px;top:59px" width="16" height="16" viewBox="0 0 16 16">
  <path d="M1.5 14.5V6.5H8M3.5 14.5V10.5M5.5 14.5V12M12.5 3H14.5V14.5H12.5" stroke="#cfcfcf" stroke-width="1" fill="none"/>
  <rect x="8.5" y="2" width="2.5" height="13" fill="#e8e8e8"/>
</svg>
<svg style="left:703px;top:64px" width="8" height="6" viewBox="0 0 8 6"><path d="M1 1.2L4 4.2L7 1.2" stroke="#c4c4c4" stroke-width="1.5" fill="none"/></svg>
<!-- proportional -->
<div class="a" style="left:721px;top:58px;width:18px;height:18px;background:#4f4f4f;border-radius:4px"></div>
<svg style="left:722px;top:59px" width="16" height="16" viewBox="0 0 16 16">
  <circle cx="8" cy="8" r="6.5" stroke="#8a8a8a" stroke-width="1" fill="none"/>
  <circle cx="8" cy="8" r="2" fill="#bdbdbd"/>
</svg>
<svg style="left:743px;top:59px" width="18" height="16" viewBox="0 0 18 16">
  <path d="M1 14.5C4 14.5 5 2 8.5 2S13 14.5 16.5 14.5" stroke="#b5b5b5" stroke-width="1.1" fill="none"/>
</svg>
<svg style="left:762px;top:64px" width="8" height="6" viewBox="0 0 8 6"><path d="M1 1.2L4 4.2L7 1.2" stroke="#9a9a9a" stroke-width="1.3" fill="none"/></svg>

<!-- right header -->
<div class="a" style="left:1079px;top:58px;width:30px;height:18px;background:#282828;border-radius:4px"></div>
<svg style="left:1075px;top:55px" width="34" height="24" viewBox="1075 55 34 24">
  <path d="M1085.5 63.7Q1091.5 57.2 1097.5 63.7Q1091.5 70.2 1085.5 63.7Z" fill="#d8d8d8"/>
  <circle cx="1091.5" cy="63.7" r="2.5" fill="#282828"/><circle cx="1091.5" cy="63.7" r="1.4" fill="#d8d8d8"/>
  <path d="M1082.7 66.2L1091 69.5L1088.2 70.8L1086.6 74Z" fill="#d8d8d8" stroke="#d8d8d8" stroke-width="0.8" stroke-linejoin="round"/>
</svg>
<svg style="left:1099px;top:64px" width="8" height="6" viewBox="0 0 8 6"><path d="M1 1.2L4 4.2L7 1.2" stroke="#c4c4c4" stroke-width="1.5" fill="none"/></svg>
<div class="a" style="left:1116px;top:58px;width:38px;height:18px;background:#282828;border-radius:4px"></div>
<div class="a" style="left:1116px;top:58px;width:18px;height:18px;background:#5680c2;border-radius:4px 0 0 4px"></div>
<svg style="left:1115px;top:57px" width="20" height="20" viewBox="1115 57 20 20">
  <path d="M1118 62.4A11.6 11.6 0 0 1 1129.8 74" stroke="#f0f0f0" stroke-width="1.1" fill="none"/>
  <path d="M1121 71L1131.5 60.5M1127.5 60.3H1131.8V64.6" stroke="#f0f0f0" stroke-width="1.1" fill="none"/>
  <circle cx="1120" cy="72" r="1.7" fill="#5680c2" stroke="#f0f0f0" stroke-width="1"/>
</svg>
<svg style="left:1140px;top:64px" width="8" height="6" viewBox="0 0 8 6"><path d="M1 1.2L4 4.2L7 1.2" stroke="#c4c4c4" stroke-width="1.5" fill="none"/></svg>
<div class="a" style="left:1161px;top:58px;width:37px;height:18px;background:#282828;border-radius:4px"></div>
<div class="a" style="left:1161px;top:58px;width:18px;height:18px;background:#5680c2;border-radius:4px 0 0 4px"></div>
<svg style="left:1160px;top:57px" width="20" height="20" viewBox="1160 57 20 20">
  <path d="M1165 66A4.7 4.7 0 1 0 1172.5 73.5" stroke="#f0f0f0" stroke-width="1.2" fill="none"/>
  <circle cx="1172.2" cy="65.5" r="4.8" fill="#f0f0f0"/>
  <path d="M1169.5 65L1171 66.5M1172.5 69L1171.5 68" stroke="#5680c2" stroke-width="0.9"/>
</svg>
<svg style="left:1185px;top:64px" width="8" height="6" viewBox="0 0 8 6"><path d="M1 1.2L4 4.2L7 1.2" stroke="#c4c4c4" stroke-width="1.5" fill="none"/></svg>
<div class="a" style="left:1206px;top:58px;width:18px;height:18px;background:#4f4f4f;border-radius:4px"></div>
<svg style="left:1207px;top:59px" width="16" height="16" viewBox="0 0 16 16">
  <path d="M5.5 3.5V1.5H14.5V10.5H12.5" stroke="#d0d0d0" stroke-width="1" fill="none"/>
  <rect x="2" y="5" width="9" height="9" stroke="#d0d0d0" stroke-width="1" fill="none"/>
  <path d="M5 8V10H7" stroke="#d0d0d0" stroke-width="0.9" fill="none"/>
</svg>
<div class="a" style="left:1231px;top:58px;width:95px;height:18px;background:#282828;border-radius:4px"></div>
<div class="a" style="left:1231px;top:58px;width:19px;height:18px;background:#4f4f4f;border-radius:4px 0 0 4px"></div>
<div class="a" style="left:1250px;top:58px;width:18px;height:18px;background:#5680c2"></div>
<div class="a" style="left:1268px;top:58px;width:19px;height:18px;background:#4f4f4f;border-left:1px solid #404040"></div>
<div class="a" style="left:1287px;top:58px;width:19px;height:18px;background:#4f4f4f;border-left:1px solid #404040"></div>
<svg style="left:1232px;top:59px" width="16" height="16" viewBox="0 0 16 16">
  <circle cx="8" cy="8" r="6.3" stroke="#d0d0d0" stroke-width="1.1" fill="none"/>
  <path d="M1.7 8H14.3M2.6 5H13.4M2.6 11H13.4" stroke="#d0d0d0" stroke-width="0.9" fill="none"/>
  <ellipse cx="8" cy="8" rx="2.6" ry="6.3" stroke="#d0d0d0" stroke-width="0.9" fill="none"/>
</svg>
<svg style="left:1251px;top:59px" width="16" height="16" viewBox="0 0 16 16"><circle cx="8" cy="8" r="6.6" fill="#fafafa"/></svg>
<svg style="left:1270px;top:59px" width="16" height="16" viewBox="0 0 16 16">
  <circle cx="8" cy="8" r="6.3" stroke="#d0d0d0" stroke-width="1" fill="#7a7a7a"/>
  <path d="M8 1.7A6.3 6.3 0 0 0 1.7 8H8Z" fill="#d0d0d0"/>
  <path d="M8 8V14.3A6.3 6.3 0 0 0 14.3 8Z" fill="#5a5a5a"/>
</svg>
<svg style="left:1289px;top:59px" width="16" height="16" viewBox="0 0 16 16">
  <circle cx="8" cy="8" r="6.3" stroke="#d0d0d0" stroke-width="1" fill="#6e6e6e"/>
  <path d="M4 7Q5 4 8 3.5" stroke="#e0e0e0" stroke-width="1.2" fill="none"/>
</svg>
<svg style="left:1312px;top:64px" width="8" height="6" viewBox="0 0 8 6"><path d="M1 1.2L4 4.2L7 1.2" stroke="#c4c4c4" stroke-width="1.5" fill="none"/></svg>
<!-- overlay text -->
<div class="t" style="left:76.3px;top:91.2px">User Perspective</div>
<div class="t" style="left:76.3px;top:111.4px;letter-spacing:0.15px">(132) Collection | Cube</div>

<div class="a" style="left:8px;top:89px;width:40px;height:292px;background:#393939"></div>
<div class="a" style="left:8px;top:89px;width:40px;height:33px;background:#5680c2;border-radius:4px"></div>
<svg style="left:8px;top:89px" width="40" height="33" viewBox="0 0 40 33">
  <rect x="8.3" y="6.3" width="21.2" height="21.4" stroke="#f5a623" stroke-width="1.5" stroke-dasharray="3.4 2.2" fill="none"/>
  <path d="M15.8 12L15.8 22.8L18.6 20.2L23.8 18.2Z" fill="#e8e8e8" stroke="#e8e8e8" stroke-width="0.6" stroke-linejoin="round"/>
  <path d="M34 32L39 27V32Z" fill="#b7c6e4"/>
</svg>
<svg style="left:14px;top:127px" width="26" height="26" viewBox="0 0 26 26">
  <circle cx="13" cy="12.5" r="11" stroke="#ececec" stroke-width="1.6" fill="none"/>
  <circle cx="13" cy="12.5" r="11" stroke="#a0303a" stroke-width="1.7" stroke-dasharray="4.3 4.3" fill="none"/>
  <path d="M13 6V10M13 15V19M6.5 12.5H10.5M15.5 12.5H19.5" stroke="#9a9a9a" stroke-width="1.3"/>
</svg>
<svg style="left:13px;top:167px" width="28" height="28" viewBox="0 0 28 28">
  <path d="M14 3L10.8 7H17.2ZM14 25L10.8 21H17.2ZM3 14L7 10.8V17.2ZM25 14L21 10.8V17.2Z" fill="#e0e0e0"/>
  <path d="M14 9V12M14 16V19M9 14H12M16 14H19" stroke="#e0e0e0" stroke-width="1.3"/>
</svg>
<svg style="left:13px;top:201px" width="28" height="28" viewBox="0 0 28 28">
  <path d="M6 11A9 9 0 0 1 22 11M22 17A9 9 0 0 1 6 17" stroke="#e0e0e0" stroke-width="1.3" fill="none"/>
  <path d="M14 10.3L17.3 13.8L14 17.3L10.7 13.8Z" fill="#a8a8a8"/>
  <path d="M2 12.3H8.5L5.25 16.5ZM19.5 16.3H26L22.75 12.1Z" fill="#e0e0e0"/>
</svg>
<svg style="left:13px;top:237px" width="36" height="30" viewBox="0 0 36 30">
  <path d="M6.5 5.5V4.5H22V20H12.5" stroke="#d8d8d8" stroke-width="1.2" fill="none"/>
  <rect x="5.5" y="12.5" width="8.5" height="8.5" fill="#e8e8e8"/>
  <path d="M13 13L19.5 6.5M16 6.3H19.8V10" stroke="#e8e8e8" stroke-width="1.3" fill="none"/>
  <path d="M28 26L32 22V26Z" fill="#8a8a8a"/>
</svg>
<svg style="left:13px;top:271px" width="28" height="28" viewBox="0 0 28 28">
  <circle cx="14" cy="13.5" r="9.6" stroke="#e0e0e0" stroke-width="1.1" stroke-dasharray="11 4.1" stroke-dashoffset="-2" fill="none"/>
  <rect x="10.3" y="9.8" width="7.4" height="7.4" fill="#e8e8e8"/>
  <path d="M14 3.5L11.2 7H16.8ZM14 23.5L11.2 20H16.8ZM4 13.5L7.5 10.7V16.3ZM24 13.5L20.5 10.7V16.3Z" fill="#e0e0e0"/>
</svg>
<svg style="left:13px;top:313px" width="36" height="30" viewBox="0 0 36 30">
  <path d="M2 18.8L3.2 15.2L16 3L18.8 5.6L6 17.8Z" fill="#e0e0e0"/>
  <path d="M14.5 4.5L17.3 7.2" stroke="#3a3a3a" stroke-width="0.8"/>
  <path d="M3 21.5C6 23.5 8 24 11 22S16 16.5 19.5 17S24 19.5 26.5 20.5" stroke="#6fd0a0" stroke-width="1.4" fill="none"/>
  <path d="M28 26L32 22V26Z" fill="#8a8a8a"/>
</svg>
<svg style="left:13px;top:347px" width="30" height="28" viewBox="0 0 30 28">
  <path d="M7.5 3V24H28" stroke="#e0e0e0" stroke-width="1.6" fill="none"/>
  <path d="M7 3H10M8 7H10.5M8 10.5H10.5M8 14H10.5M8 17.5H10.5M12 21.5V24M16 21.5V24M20 21.5V24M24 21.5V24" stroke="#e0e0e0" stroke-width="1"/>
  <path d="M10 12A11 11 0 0 1 21 22H10Z" fill="#6fd0a0"/>
  <path d="M10.5 10A12.5 12.5 0 0 1 23.5 22" stroke="#e0e0e0" stroke-width="1" fill="none"/>
</svg>

<svg style="left:1120px;top:80px" width="214" height="100" viewBox="1120 80 214 100">
  <circle cx="1143" cy="102.5" r="13.6" fill="#2a2a2a" fill-opacity="0.95"/>
  <circle cx="1173.3" cy="102.5" r="13.6" fill="#2a2a2a" fill-opacity="0.95"/>
  <circle cx="1203.6" cy="102.5" r="13.6" fill="#2a2a2a" fill-opacity="0.95"/>
  <circle cx="1234" cy="102.5" r="13.6" fill="#2a2a2a" fill-opacity="0.95"/>
  <path d="M1137.3 97.2H1148.2L1150.8 109.6H1134.7Z" fill="#d0d0d0"/>
  <g fill="#2a2a2a">
    <path d="M1138.6 98.6H1141L1140.7 101.8H1138Z"/><path d="M1142.3 98.6H1144.7V101.8H1142.2Z"/><path d="M1146 98.6H1147.2L1147.8 101.8H1145.8Z"/>
    <path d="M1137.8 103.1H1140.6L1140.4 106.6H1137.1Z"/><path d="M1142.1 103.1H1144.9L1145 106.6H1142Z"/><path d="M1146.1 103.1H1148L1148.7 106.6H1146.2Z"/>
    <path d="M1136.8 107.8H1140.3L1140.2 108.4H1136.7Z"/><path d="M1141.9 107.8H1145L1145 108.4H1141.9Z"/><path d="M1146.4 107.8H1149.2L1149.3 108.4H1146.4Z"/>
  </g>
  <circle cx="1168.8" cy="99.6" r="3.6" fill="#d0d0d0"/><circle cx="1177.2" cy="99.6" r="3.6" fill="#d0d0d0"/><rect x="1168.8" y="97" width="8.4" height="5.5" fill="#d0d0d0"/>
  <circle cx="1168.8" cy="99.6" r="1.2" fill="#6a6a6a"/><circle cx="1177.2" cy="99.6" r="1.2" fill="#6a6a6a"/>
  <rect x="1167.5" y="105" width="9" height="6" fill="#d0d0d0"/><path d="M1176.5 108L1181 104.8V111.2Z" fill="#d0d0d0"/><rect x="1165.3" y="106.5" width="2.5" height="3" fill="#d0d0d0"/>
  <g stroke="#d0d0d0" stroke-linecap="round" fill="none" stroke-width="1.9">
    <path d="M1200.6 104V96.6M1204.6 104V95.2M1208.5 104.5V96.6M1211.3 105.5L1211.9 101.4M1196.4 103.6L1200.5 108.3"/>
  </g>
  <path d="M1199.7 103.5H1212L1211 108.5Q1209 111.3 1205 111.2Q1201.5 111 1199.8 107.5Z" fill="#d0d0d0"/>
  <circle cx="1235.5" cy="100.8" r="6.6" fill="#d0d0d0"/>
  <path d="M1235.5 97V104.6M1231.7 100.8H1239.3" stroke="#2a2a2a" stroke-width="1.2"/>
  <path d="M1231 105.5L1226 110.5" stroke="#d0d0d0" stroke-width="1.6"/>
  <!-- axis gizmo -->
  <path d="M1283.9 129.8L1261.1 118.6" stroke="#6a8a28" stroke-width="2"/>
  <path d="M1283.9 129.8L1307 118.6" stroke="#94404e" stroke-width="2"/>
  <path d="M1283.9 129.8V101.5" stroke="#2f8ff0" stroke-width="2"/>
  <circle cx="1261.1" cy="141" r="6.1" fill="#f0344f"/>
  <circle cx="1307" cy="141" r="6.1" fill="#86d000"/>
  <circle cx="1284.3" cy="158" r="6.1" fill="#2e69ad"/>
  <circle cx="1261.1" cy="118.6" r="7.8" fill="#6a8a28"/>
  <circle cx="1307" cy="118.6" r="7.8" fill="#94404e"/>
  <circle cx="1283.9" cy="101.5" r="7.8" fill="#2f8ff0"/>
  <text x="1261.1" y="122.6" font-family="Liberation Sans" font-size="11" text-anchor="middle" fill="#111">Y</text>
  <text x="1307" y="122.6" font-family="Liberation Sans" font-size="11" text-anchor="middle" fill="#111">X</text>
  <text x="1283.9" y="105.5" font-family="Liberation Sans" font-size="11" text-anchor="middle" fill="#111">Z</text>
  <path d="M1334 95H1331Q1326 95 1326 101.5Q1326 108 1331 108H1334Z" fill="#2a2a2a"/>
  <path d="M1332 98L1328.5 101.5L1332 105" stroke="#bbb" stroke-width="1" fill="none"/>
</svg>
<!-- 3d cursor & origin -->
<svg style="left:670px;top:385px" width="50" height="50" viewBox="670 385 50 50">
  <circle cx="694.1" cy="409" r="10" stroke="#f2f2f2" stroke-width="1.4" fill="none"/>
  <circle cx="694.1" cy="409" r="10" stroke="#e82020" stroke-width="1.5" stroke-dasharray="3.5 4.3" fill="none"/>
  <path d="M694.1 391V405M694.1 413V427M679.8 403.2L691 408M679.8 415.4L691 410M708 402.4L697 408M708.6 415.3L697 410" stroke="#111" stroke-width="1.2"/>
  <circle cx="694.1" cy="409" r="2.6" fill="#f5a623" stroke="#222" stroke-width="0.8"/>
</svg>

<div class="a" style="left:1337px;top:55px;width:277px;height:140px;background:#282828;border-radius:6px;overflow:hidden">
  <div class="a" style="left:0;top:0;width:277px;height:25px;background:#3a3a3a"></div>
</div>
<div class="a" style="left:1346px;top:58px;width:30px;height:18px;background:#282828;border-radius:4px"></div>
<svg style="left:1349px;top:59px" width="16" height="16" viewBox="0 0 16 16">
  <rect x="1.5" y="1" width="5" height="3" fill="#d8d8d8"/>
  <path d="M3 4V13.5H7M3 9H7" stroke="#d8d8d8" stroke-width="1" fill="none"/>
  <rect x="7" y="7.5" width="8" height="3" fill="#e8e8e8"/><rect x="7" y="12" width="8" height="3" fill="#e8e8e8"/>
</svg>
<svg style="left:1366px;top:64px" width="8" height="6" viewBox="0 0 8 6"><path d="M1 1.2L4 4.2L7 1.2" stroke="#c4c4c4" stroke-width="1.5" fill="none"/></svg>
<div class="a" style="left:1383px;top:58px;width:30px;height:18px;background:#282828;border-radius:4px"></div>
<svg style="left:1385px;top:59px" width="16" height="16" viewBox="0 0 16 16">
  <path d="M1.5 5V14.5H11M3 3.5V13H12.5" stroke="#d0d0d0" stroke-width="1" fill="none"/>
  <rect x="5" y="1.5" width="9.5" height="9.5" stroke="#e0e0e0" stroke-width="1" fill="none"/>
  <path d="M5.5 10.5L8.5 5L10.5 8L11.5 7L14 10.5Z" fill="#e0e0e0"/><circle cx="12" cy="4" r="1.1" fill="#e0e0e0"/>
</svg>
<svg style="left:1403px;top:64px" width="8" height="6" viewBox="0 0 8 6"><path d="M1 1.2L4 4.2L7 1.2" stroke="#c4c4c4" stroke-width="1.5" fill="none"/></svg>
<div class="a" style="left:1431px;top:58px;width:109px;height:18px;background:#1d1d1d;border-radius:4px"></div>
<svg style="left:1434px;top:59px" width="16" height="16" viewBox="0 0 16 16">
  <circle cx="9.5" cy="6" r="4.2" stroke="#e0e0e0" stroke-width="1.2" fill="none"/>
  <path d="M6.5 9L1.5 14" stroke="#e0e0e0" stroke-width="1.3"/>
</svg>
<div class="a" style="left:1558px;top:58px;width:30px;height:18px;background:#282828;border-radius:4px"></div>
<svg style="left:1560px;top:59px" width="16" height="16" viewBox="0 0 16 16">
  <path d="M1 2H14L9 8.5V14.5L6 11V8.5Z" stroke="#e0e0e0" stroke-width="1.1" fill="none" stroke-linejoin="round"/>
</svg>
<svg style="left:1578px;top:64px" width="8" height="6" viewBox="0 0 8 6"><path d="M1 1.2L4 4.2L7 1.2" stroke="#c4c4c4" stroke-width="1.5" fill="none"/></svg>
<div class="a" style="left:1595px;top:58px;width:19px;height:18px;background:#4a4a4a;border-radius:4px 0 0 4px"></div>
<svg style="left:1597px;top:59px" width="16" height="16" viewBox="0 0 16 16">
  <path d="M1.5 4.5H8M2.5 7V14.5H13.5V9M5 10H8" stroke="#d0d0d0" stroke-width="1.1" fill="none"/>
  <circle cx="12" cy="4" r="3.3" fill="#f0f0f0"/><path d="M12 2V6M10 4H14" stroke="#444" stroke-width="1"/>
</svg>
<!-- rows -->
<svg style="left:1359px;top:84px" width="16" height="16" viewBox="0 0 16 16">
  <path d="M1.5 1.5H14.5V4.5H1.5ZM2.5 4.5V13.5H13.5V4.5M6.5 8H9.5" stroke="#d8d8d8" stroke-width="1.2" fill="none"/>
</svg>
<div class="t" style="left:1381.5px;top:87px">Scene Collection</div>
<svg style="left:1362px;top:107px" width="10" height="10" viewBox="0 0 10 10"><path d="M1.5 2H8.5L5 8Z" fill="#cfcfcf"/></svg>
<div class="a" style="left:1382px;top:106px;width:10px;height:10px;background:#d8d8d8;border-radius:2px"></div>
<svg style="left:1382px;top:106px" width="10" height="10" viewBox="0 0 10 10"><path d="M2 5L4.2 7.3L8.3 2.5" stroke="#222" stroke-width="1.5" fill="none"/></svg>
<div class="a" style="left:1397px;top:102px;width:20px;height:18px;background:#4a4a4a;border-radius:4px"></div>
<svg style="left:1399px;top:103px" width="16" height="16" viewBox="0 0 16 16">
  <path d="M1.5 1.5H14.5V4.5H1.5ZM2.5 4.5V13.5H13.5V4.5M6.5 8H9.5" stroke="#d8d8d8" stroke-width="1.2" fill="none"/>
</svg>
<div class="t" style="left:1421.5px;top:106.5px">Collection</div>
<path/>
<svg style="left:1380px;top:115px" width="20" height="40" viewBox="1380 115 20 40">
  <path d="M1386.5 116V151.5M1386.5 131H1398M1386.5 151H1398" stroke="#7a7a7a" stroke-width="1" fill="none"/>
  <path d="M1384 127.5L1390 131L1384 134.5ZM1384 147.5L1390 151L1384 154.5Z" fill="#c8c8c8"/>
</svg>
<svg style="left:1398px;top:122px" width="17" height="17" viewBox="0 0 17 17">
  <circle cx="6" cy="4.5" r="3.3" fill="#e8944a"/><circle cx="12" cy="4" r="3.6" fill="#e8944a"/>
  <circle cx="6" cy="4.5" r="1" fill="#282828"/><circle cx="12" cy="4" r="1.2" fill="#282828"/>
  <rect x="3.5" y="8.5" width="9" height="6.5" fill="#e8944a"/><path d="M12.5 11.5L16.5 8.5V15.5Z" fill="#e8944a"/><path d="M3.5 10.5H1V13H3.5" fill="#e8944a"/>
</svg>
<div class="t" style="left:1421.5px;top:126.5px">Camera</div>
<div class="a" style="left:1480px;top:122px;width:20px;height:18px;background:#4a4a4a;border-radius:4px"></div>
<svg style="left:1482px;top:123px" width="16" height="16" viewBox="0 0 16 16">
  <path d="M2 8.5V4.5Q2 2 4.5 2H7Q8 0.8 10.5 1.2Q14 1.8 13.5 5Q13.3 7 11 8.5Z" stroke="#2fd0b0" stroke-width="1.1" fill="none"/>
  <circle cx="10.5" cy="4.5" r="1" fill="#2fd0b0"/>
  <path d="M1 10.5V14M1 12.3H3M3 10H10.5V14.5H3ZM10.5 12.3L14.5 10V14.5Z" stroke="#2fd0b0" stroke-width="1.1" fill="none"/>
</svg>
<div class="a" style="left:1397px;top:142px;width:20px;height:18px;background:#5a5a5a;border-radius:4px"></div>
<svg style="left:1399px;top:143px" width="16" height="16" viewBox="0 0 16 16">
  <path d="M1.5 2H14.5L8 15Z" fill="#e8944a"/><path d="M5.5 5H10.5L8 10Z" fill="#5a5a5a"/>
</svg>
<div class="t" style="left:1421.5px;top:146.5px">Cube</div>
<svg style="left:1468px;top:143px" width="16" height="16" viewBox="0 0 16 16">
  <path d="M2.5 2.5H13.5L8 13.5Z" stroke="#2fd0b0" stroke-width="1.1" fill="none"/>
  <rect x="1" y="1" width="3" height="3" fill="#282828" stroke="#2fd0b0" stroke-width="1"/>
  <rect x="12" y="1" width="3" height="3" fill="#282828" stroke="#2fd0b0" stroke-width="1"/>
  <rect x="6.5" y="12" width="3" height="3" fill="#282828" stroke="#2fd0b0" stroke-width="1"/>
</svg>
<svg style="left:1589px;top:103px" width="17" height="55" viewBox="0 0 17 55">
  <g id="eye"><path d="M1 7.7Q8.5 0 16 7.7Q8.5 15.4 1 7.7Z" fill="#e6e6e6"/><circle cx="8.5" cy="7.7" r="3" fill="#282828"/><circle cx="8.5" cy="7.7" r="1.5" fill="#e6e6e6"/></g>
  <use href="#eye" y="20"/><use href="#eye" y="40"/>
</svg>

<div class="a" style="left:1337px;top:198px;width:277px;height:675px;background:#424242;border-radius:6px 6px 0 6px;overflow:hidden">
  <div class="a" style="left:0;top:0;width:277px;height:24px;background:#3a3a3a"></div>
  <div class="a" style="left:0;top:25px;width:28px;height:650px;background:#282828"></div>
</div>
<div class="a" style="left:1346px;top:201px;width:30px;height:18px;background:#282828;border-radius:4px"></div>
<svg style="left:1348px;top:202px" width="16" height="16" viewBox="0 0 16 16">
  <rect x="1" y="1.5" width="13" height="5.5" rx="2.75" fill="#e0e0e0"/><rect x="1" y="9" width="13" height="5.5" rx="2.75" fill="#e0e0e0"/>
  <rect x="7.5" y="2.7" width="5.3" height="3.1" rx="1.5" fill="#282828"/><rect x="10" y="10.2" width="2.8" height="3.1" rx="1.4" fill="#282828"/>
</svg>
<svg style="left:1366px;top:207px" width="8" height="6" viewBox="0 0 8 6"><path d="M1 1.2L4 4.2L7 1.2" stroke="#c4c4c4" stroke-width="1.5" fill="none"/></svg>
<svg style="left:1391px;top:203px" width="14" height="14" viewBox="0 0 14 14">
  <path d="M0.5 3.5V0.5H3.5M10.5 0.5H13.5V3.5M13.5 10.5V13.5H10.5M3.5 13.5H0.5V10.5" stroke="#d8d8d8" stroke-width="1" fill="none"/>
  <rect x="3" y="3" width="8" height="8" fill="#e8e8e8"/>
</svg>
<div class="t" style="left:1414px;top:204.5px">Cube</div>
<svg style="left:1589px;top:201px" width="16" height="16" viewBox="0 0 16 16">
  <path d="M9 1.5L14.5 7L13 8L11.5 7.5L8.5 10.5L9 13L8 14L2 8L3 7L5.5 7.5L8.5 4.5L8 3Z" stroke="#cfcfcf" stroke-width="1" fill="none" stroke-linejoin="round"/>
  <path d="M5 11L0.5 15.5" stroke="#cfcfcf" stroke-width="1"/>
</svg>
<!-- tabs -->
<svg style="left:1337px;top:223px" width="28" height="430" viewBox="1337 223 28 430">
  <g fill="#1e1e1e">
    <rect x="1339" y="258" width="26" height="1.2"/><rect x="1339" y="295" width="26" height="1.2"/>
    <rect x="1339" y="323" width="26" height="1.2"/><rect x="1339" y="351" width="26" height="1.2"/>
    <rect x="1339" y="379" width="26" height="1.2"/><rect x="1339" y="406" width="26" height="1.2"/>
    <rect x="1339" y="443" width="26" height="1.2"/>
    <rect x="1339" y="498.5" width="26" height="1.2"/><rect x="1339" y="526.5" width="26" height="1.2"/>
    <rect x="1339" y="554.5" width="26" height="1.2"/><rect x="1339" y="582.5" width="26" height="1.2"/>
    <rect x="1339" y="610.5" width="26" height="1.2"/><rect x="1339" y="647" width="26" height="1.2"/>
  </g>
  <rect x="1339" y="444" width="30" height="26" rx="4" fill="#424242"/>
  <!-- tool -->
  <path d="M1347 238V245" stroke="#e0e0e0" stroke-width="1.2"/>
  <path d="M1345.2 246H1348.8L1349 251Q1347 253 1345 251Z" fill="#e0e0e0"/>
  <path d="M1352.5 238.5V241.5L1354.5 243V252" stroke="#e0e0e0" stroke-width="0"/>
  <path d="M1352 238Q1351.2 242 1354.5 243.3V251.5A0.9 0.9 0 0 0 1356.3 251.5V243.3Q1359.5 242 1358.7 238L1357.3 239V241.3H1353.4V239Z" fill="#e0e0e0"/>
  <!-- render -->
  <path d="M1345 275.5Q1345 274.5 1346 274.5H1347L1348 273H1352L1353 274.5H1358Q1359 274.5 1359 275.5V286.5H1345Z" fill="#e0e0e0"/>
  <rect x="1346.5" y="277.8" width="8.2" height="7.2" fill="#282828"/>
  <path d="M1347.3 279.5H1354M1347.3 281.5H1354M1347.3 283.5H1354" stroke="#9a9a9a" stroke-width="0.9"/>
  <rect x="1355.8" y="278.2" width="2" height="2" fill="#282828"/><rect x="1355.8" y="282" width="2" height="2" fill="#282828"/>
  <rect x="1355.5" y="272" width="2.5" height="1.2" fill="#e0e0e0"/>
  <!-- output -->
  <path d="M1345 301.5Q1345 300.5 1346 300.5H1358Q1359 300.5 1359 301.5V306H1345Z" fill="#e0e0e0"/>
  <rect x="1347" y="305" width="10" height="10" fill="#e0e0e0"/>
  <rect x="1348.5" y="307" width="7" height="6.5" fill="#6a6a6a"/>
  <path d="M1349 313L1351.5 309.5L1353 311.5L1354 310.5L1355.5 313Z" fill="#e0e0e0"/>
  <!-- view layer -->
  <path d="M1345 331.5V342.5H1356M1346.8 329.8V340.8H1357.8" stroke="#d8d8d8" stroke-width="1" fill="none"/>
  <rect x="1348.5" y="328.5" width="10.5" height="10.5" stroke="#e6e6e6" stroke-width="1" fill="#282828"/>
  <path d="M1349 338.5L1352.5 332.5L1355 336L1356 335L1358.5 338.5Z" fill="#e6e6e6"/><circle cx="1356.5" cy="331" r="1" fill="#e6e6e6"/>
  <!-- scene -->
  <path d="M1349.5 356.5L1353.5 366.5H1345.5Z" fill="#e0e0e0"/>
  <circle cx="1357.5" cy="357.5" r="1.8" fill="#e0e0e0"/>
  <circle cx="1355" cy="366" r="3.8" fill="#282828" stroke="#e0e0e0" stroke-width="1.1"/>
  <circle cx="1355" cy="366" r="1.5" fill="#e0e0e0"/>
  <!-- world -->
  <circle cx="1351.8" cy="392.6" r="6" stroke="#e07080" stroke-width="1.3" fill="none"/>
  <path d="M1347.5 388Q1350 388.5 1350.5 391Q1349 392.5 1350.5 394.5L1351.5 397.5Q1348 397 1346.5 393.5Q1346 390 1347.5 388ZM1353 387.5Q1356 387.8 1357.2 390.5L1355 391.5Q1353.5 390.5 1353 387.5ZM1353.5 393.5Q1356.5 393.5 1357 395Q1355.5 397.5 1353.8 397.6Z" fill="#e07080"/>
  <path d="M1344.5 399.8L1359.5 385.4" stroke="#282828" stroke-width="2"/>
  <path d="M1345.2 399.2L1358.8 386" stroke="#e07080" stroke-width="1"/>
  <!-- object -->
  <path d="M1345 425V421.5H1348.5M1355.5 421.5H1359V425M1359 432V435.5H1355.5M1348.5 435.5H1345V432" stroke="#d38a50" stroke-width="1" fill="none"/>
  <rect x="1347.3" y="423.8" width="9.4" height="9.4" fill="#e3975a"/>
  <!-- wrench -->
  <path d="M1356.5 449.5A4.2 4.2 0 0 0 1351.3 454.2L1345.3 460.2A1.9 1.9 0 0 0 1348 462.9L1354 456.9A4.2 4.2 0 0 0 1358.7 451.7L1356.5 453.5L1354.5 451.5Z" fill="#8cb8f0"/>
  <!-- particles -->
  <g fill="#6f9ad6" stroke="#6f9ad6" stroke-width="1">
    <circle cx="1347.5" cy="480" r="2.3"/><circle cx="1357.5" cy="480" r="1.3"/><circle cx="1347.5" cy="490" r="1.3"/><circle cx="1357.5" cy="490" r="1.7"/>
    <path d="M1347.5 480H1357.5M1347.5 480V490M1347.5 480L1357.5 490" fill="none"/>
  </g>
  <!-- physics -->
  <circle cx="1351" cy="513.5" r="6" stroke="#6f9ad6" stroke-width="1.3" fill="none"/>
  <circle cx="1351" cy="513.5" r="3" fill="#6f9ad6"/>
  <circle cx="1357.5" cy="507.5" r="2.5" fill="#6f9ad6" stroke="#282828" stroke-width="1"/>
  <!-- constraints -->
  <path d="M1345.5 543Q1345 537.5 1352 535L1358 533.5Q1359.5 534.5 1358.5 537L1355 543Q1352 547.5 1348 546.5Q1346 545.8 1345.5 543Z" stroke="#6f9ad6" stroke-width="1.3" fill="none"/>
  <circle cx="1350.5" cy="542" r="2.8" stroke="#6f9ad6" stroke-width="1.3" fill="none"/>
  <circle cx="1350.5" cy="542" r="0.8" fill="#6f9ad6"/>
  <!-- data -->
  <path d="M1346 562.5H1358L1352 574Z" stroke="#2fd0b0" stroke-width="1.1" fill="none"/>
  <rect x="1344.5" y="561" width="3" height="3" fill="#282828" stroke="#2fd0b0" stroke-width="1"/>
  <rect x="1356.5" y="561" width="3" height="3" fill="#282828" stroke="#2fd0b0" stroke-width="1"/>
  <rect x="1350.5" y="572.5" width="3" height="3" fill="#282828" stroke="#2fd0b0" stroke-width="1"/>
  <!-- material -->
  <circle cx="1351.8" cy="596.5" r="6.8" fill="#e07080"/>
  <path d="M1352.3 596V590.3A5.9 5.9 0 0 1 1357.9 595.5Z" fill="#282828"/>
  <path d="M1351.3 597V602.7A5.9 5.9 0 0 1 1345.8 597.5Z" fill="#282828"/>
  <!-- texture -->
  <rect x="1345" y="626" width="14" height="14" fill="#e07080"/>
  <g fill="#282828">
    <rect x="1348" y="627" width="3" height="3"/><rect x="1354" y="627" width="3" height="3"/>
    <rect x="1345.5" y="630" width="3" height="3"/><rect x="1351" y="630" width="3" height="3"/><rect x="1357" y="630" width="1.5" height="3" fill="#e07080"/>
    <rect x="1348" y="633" width="3" height="3"/><rect x="1354" y="633" width="3" height="3"/>
    <rect x="1345.5" y="636" width="3" height="3"/><rect x="1351" y="636" width="3" height="3"/>
  </g>
</svg>
<!-- add modifier -->
<div class="a" style="left:1374px;top:232px;width:231px;height:18px;background:#282828;border-radius:4px"></div>
<div class="t" style="left:1381px;top:235.5px">Add Modifier</div>
<svg style="left:1594px;top:238px" width="8" height="6" viewBox="0 0 8 6"><path d="M1 1.2L4 4.2L7 1.2" stroke="#c4c4c4" stroke-width="1.5" fill="none"/></svg>

<div class="a" style="left:0;top:875px;width:1614px;height:20px;background:#393939"></div>
<svg style="left:10px;top:877px" width="13" height="16" viewBox="0 0 13 16">
  <rect x="0.8" y="0.8" width="10.4" height="14.4" rx="3" stroke="#d8d8d8" stroke-width="1.1" fill="none"/>
  <path d="M0.8 7H6V0.8H3.8Q0.8 0.8 0.8 3.8Z" fill="#bdbdbd"/>
</svg>
<svg style="left:246px;top:877px" width="13" height="16" viewBox="0 0 13 16">
  <rect x="0.8" y="0.8" width="10.4" height="14.4" rx="3" stroke="#d8d8d8" stroke-width="1.1" fill="none"/>
  <rect x="4.8" y="3" width="2.4" height="5" fill="#bdbdbd"/>
</svg>
<svg style="left:482px;top:877px" width="13" height="16" viewBox="0 0 13 16">
  <rect x="0.8" y="0.8" width="10.4" height="14.4" rx="3" stroke="#d8d8d8" stroke-width="1.1" fill="none"/>
  <path d="M11.2 7H6V0.8H8.2Q11.2 0.8 11.2 3.8Z" fill="#bdbdbd"/>
</svg>
<div class="t" style="left:505px;top:880px">Context Menu</div>
<div class="t" style="left:1159.3px;top:880px">Collection</div><div class="t" style="left:1213.4px;top:880px">|</div><div class="t" style="left:1218.2px;top:880px">Cube</div><div class="t" style="left:1247.5px;top:880px">|</div><div class="t" style="left:1252.2px;top:880px">Verts:8</div><div class="t" style="left:1292.4px;top:880px">|</div><div class="t" style="left:1297.5px;top:880px">Faces:6</div><div class="t" style="left:1340.2px;top:880px">|</div><div class="t" style="left:1345.2px;top:880px">Tris:12</div><div class="t" style="left:1383.6px;top:880px">|</div><div class="t" style="left:1388.4px;top:880px">Objects:0/2</div><div class="t" style="left:1450.4px;top:880px">|</div><div class="t" style="left:1455.2px;top:880px">Mem: 36.0 MB</div><div class="t" style="left:1532.9px;top:880px">|</div><div class="t" style="left:1537.7px;top:880px">v2.80.75</div>

</body></html>
